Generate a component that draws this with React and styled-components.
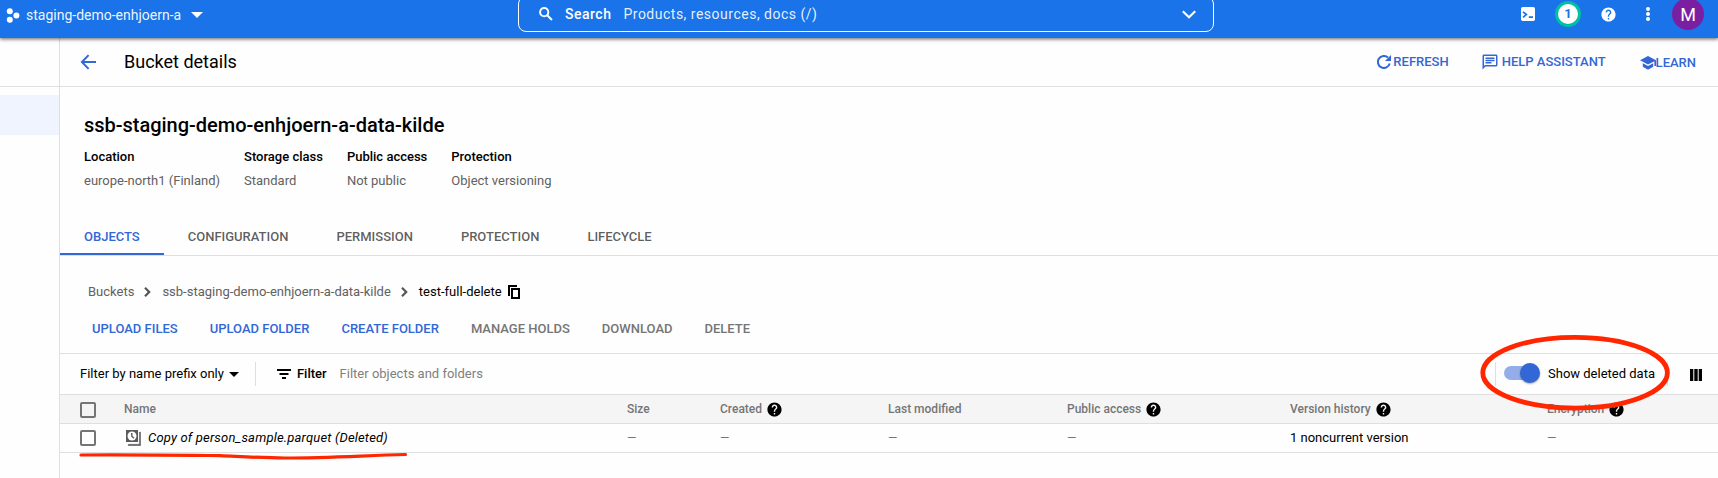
import React from 'react';
import styled, { createGlobalStyle, css } from 'styled-components';
import { MdHelp, MdOutlineChat } from 'react-icons/md';

const blue = '#3367d6';
const line = '#dfdfdf';
const grey = '#616161';

const GlobalStyle = createGlobalStyle`
  * { box-sizing: border-box; }
  html, body { margin: 0; padding: 0; overflow: hidden; }
  body {
    background: #fefefe;
    color: #000;
    font-family: Roboto, sans-serif;
    font-size: 13px;
    line-height: 18px;
  }
  svg { display: block; flex: none; }
`;

const Page = styled.div`
  position: relative;
  display: flex;
  flex-direction: column;
  height: 478px;
  overflow: hidden;
`;

/* ---- top bar ---- */
const TopBar = styled.header`
  position: relative;
  z-index: 1;
  display: grid;
  grid-template-columns: 518px 696px 1fr;
  align-items: start;
  height: 38px;
  background: #1a73e8;
  color: #fff;
  font-size: 14px;
  line-height: 20px;
  box-shadow: 0 1px 3px rgba(0, 0, 0, 0.42), 0 2px 4px rgba(0, 0, 0, 0.2);
`;
const Project = styled.div`
  display: flex;
  align-items: center;
  height: 30px;
  padding-left: 6px;
  color: #ffffffee;
`;
const ProjectName = styled.span`
  margin: 0 10px 0 6px;
`;
const SearchBox = styled.div`
  display: flex;
  align-items: center;
  height: 36px;
  margin-top: -4px;
  padding: 0 17px 0 20px;
  border: 1px solid #fff;
  border-radius: 8px;
  letter-spacing: 0.5px;
`;
const SearchLabel = styled.b`
  margin: 0 12px 0 12px;
  font-weight: 500;
`;
const SearchHint = styled.span`
  flex: 1;
  color: #ffffffe6;
`;
const TopActions = styled.div`
  display: flex;
  justify-content: flex-end;
  padding-right: 10px;
`;
const TopAction = styled.div`
  display: flex;
  align-items: center;
  justify-content: center;
  width: 40px;
  height: 28px;
`;
const Badge = styled.div`
  flex: none;
  display: flex;
  align-items: center;
  justify-content: center;
  width: 26px;
  height: 26px;
  border: 3px solid #00bfa5;
  border-radius: 50%;
  background: #fff;
  color: #1a73e8;
  font-size: 13px;
  font-weight: 700;
`;
const Avatar = styled.div`
  flex: none;
  width: 32px;
  height: 32px;
  border-radius: 50%;
  background: #7b1fa2;
  font-size: 18px;
  line-height: 33px;
  text-align: center;
`;

/* ---- body ---- */
const Body = styled.div`
  display: flex;
  flex: 1;
`;
const Nav = styled.nav`
  width: 60px;
  border-right: 1px solid ${line};
`;
const NavHead = styled.div`
  height: 49px;
  border-bottom: 1px solid ${line};
`;
const NavSelected = styled.div`
  height: 40px;
  margin-top: 8px;
  background: #f0f4ff;
`;
const Main = styled.main`
  flex: 1;
  min-width: 0;
`;
const PageHeader = styled.div`
  display: flex;
  align-items: center;
  height: 49px;
  padding: 0 22px 0 20px;
  border-bottom: 1px solid ${line};
  color: ${blue};
`;
const PageTitle = styled.h1`
  flex: 1;
  margin: 0 0 0 27px;
  color: #000;
  font-size: 18px;
  font-weight: 400;
  line-height: 24px;
`;
const HeaderAction = styled.div`
  display: flex;
  align-items: center;
  gap: ${(p) => p.$gap || 0}px;
  margin-left: ${(p) => p.$before || 0}px;
  padding-top: ${(p) => p.$drop || 0}px;
  font-weight: 500;
`;

const Summary = styled.section`
  padding: 26px 24px 0;
`;
const BucketName = styled.h2`
  margin: 0 0 11px;
  font-size: 20px;
  font-weight: 500;
  letter-spacing: -0.02px;
  line-height: 24px;
`;
const Facts = styled.dl`
  display: flex;
  gap: 24px;
  margin: 0;
`;
const FactName = styled.dt`
  margin-bottom: 6px;
  font-weight: 500;
`;
const FactValue = styled.dd`
  margin: 0;
  color: ${grey};
`;

const Tabs = styled.div`
  display: flex;
  height: 38px;
  margin-top: 28px;
  border-bottom: 1px solid ${line};
`;
const Tab = styled.div`
  padding: 10px 24px 0;
  color: #000000a6;
  font-weight: 500;
  ${(p) =>
    p.$active &&
    css`
      color: ${blue};
      border-bottom: 2px solid ${blue};
    `}
`;

const Crumbs = styled.div`
  display: flex;
  align-items: center;
  height: 18px;
  margin: 27px 0 0 28px;
  color: ${grey};
`;
const Crumb = styled.span`
  ${(p) => p.$current && 'color: #000; margin-right: 6px;'}
`;
const CrumbArrow = styled.svg`
  margin: 0 11px 0 10px;
`;

const Actions = styled.div`
  display: flex;
  gap: 32px;
  padding: 19px 0 15px 32px;
  border-bottom: 1px solid ${line};
`;
const Action = styled.span`
  color: ${(p) => (p.$disabled ? '#757575' : blue)};
  font-weight: 500;
`;

const FilterBar = styled.div`
  display: flex;
  align-items: center;
  height: 40px;
  padding: 0 16px 0 20px;
`;
const Divider = styled.i`
  width: 1px;
  height: 24px;
  margin: 0 ${(p) => p.$after}px 0 ${(p) => p.$before || 0}px;
  background: ${line};
`;
const MenuLabel = styled.span`
  margin-right: 5px;
`;
const FilterLabel = styled.b`
  margin: 0 13px 0 6px;
  font-weight: 500;
`;
const FilterHint = styled.span`
  flex: 1;
  color: #808080;
`;
const Track = styled.div`
  display: flex;
  align-items: center;
  justify-content: flex-end;
  width: 36px;
  height: 14px;
  margin: -2px 8px 0 0;
  border-radius: 7px;
  background: linear-gradient(90deg, #93ade8 0 30px, transparent 30px);
`;
const Thumb = styled.div`
  flex: none;
  width: 20px;
  height: 20px;
  border-radius: 50%;
  background: ${blue};
  box-shadow: 0 1px 2px rgba(0, 0, 0, 0.35);
`;
const ColumnsIcon = styled.svg`
  margin-top: 2px;
`;

const Row = styled.div`
  display: grid;
  grid-template-columns: 64px 503px 93px 168px 179px 223px 257px 1fr;
  align-items: center;
  height: 29px;
  padding-bottom: 1px;
  border-bottom: 1px solid ${line};
  ${(p) =>
    p.$head &&
    css`
      height: 30px;
      border-top: 1px solid ${line};
      background: #f5f5f5;
      color: #757575;
      font-size: 12px;
      font-weight: 500;
      line-height: 16px;
    `}
`;
const Cell = styled.div`
  display: flex;
  align-items: center;
  color: ${(p) => (p.$muted ? '#757575' : 'inherit')};
  font-size: ${(p) => (p.$muted ? '12px' : 'inherit')};
`;
const ObjectName = styled.i`
  margin-left: 7px;
  letter-spacing: 0.18px;
`;
const CheckBox = styled.div`
  width: 16px;
  height: 16px;
  margin: ${(p) => (p.$head ? '2px' : '1px')} 0 0 20px;
  border: 2px solid #757575;
  border-radius: 2px;
`;
const HeadHelp = styled(MdHelp)`
  margin: 2px 0 0 4px;
  color: #000;
`;

const Markup = styled.svg`
  position: absolute;
  inset: 0;
  z-index: 2;
  pointer-events: none;
`;

const ProjectIcon = () => (
  <svg width="14" height="15" viewBox="0 0 14 15" fill="#fff">
    <circle cx="3.8" cy="3.3" r="3" />
    <circle cx="3.8" cy="11.7" r="3" />
    <circle cx="10.4" cy="7.5" r="3" />
  </svg>
);
const Caret = ({ w, h, fill = '#000' }) => (
  <svg width={w} height={h} viewBox="0 0 10 5" preserveAspectRatio="none" fill={fill}>
    <path d="M0 0h10L5 5z" />
  </svg>
);
const SearchIcon = () => (
  <svg width="14" height="14" viewBox="0 0 14 14" fill="none" stroke="#fff" strokeWidth="2">
    <circle cx="5.2" cy="5.2" r="4.1" />
    <path d="M8.2 8.2l4.8 4.8" />
  </svg>
);
const DownIcon = () => (
  <svg width="14" height="9" viewBox="0 0 14 9" fill="none" stroke="#fff" strokeWidth="2.1">
    <path d="M.8 1.2L7 7.2l6.2-6" />
  </svg>
);
const ShellIcon = () => (
  <svg width="14" height="14" viewBox="0 0 14 14">
    <rect width="14" height="14" rx="1.8" fill="#fff" />
    <path d="M2 4.8l3.4 2.7L2 10.3M7.8 10.2h4.2" fill="none" stroke="#1a73e8" strokeWidth="1.7" />
  </svg>
);
const DotsIcon = () => (
  <svg width="4" height="14" viewBox="0 0 4 14" fill="#fff">
    <circle cx="2" cy="2" r="2" />
    <circle cx="2" cy="7" r="2" />
    <circle cx="2" cy="12" r="2" />
  </svg>
);
const BackIcon = () => (
  <svg width="17" height="16" viewBox="0 0 17 16" fill="none" stroke={blue} strokeWidth="2">
    <path d="M16 8H2M8.6 1.1L1.9 8l6.7 6.9" />
  </svg>
);
const RefreshIcon = () => (
  <svg width="14" height="14" viewBox="0 0 14 14">
    <path d="M12.7 8.6A6 6 0 1 1 11 2.6" fill="none" stroke={blue} strokeWidth="2" />
    <path d="M14 0v6H8z" fill={blue} />
  </svg>
);
const LearnIcon = () => (
  <svg width="16" height="14" viewBox="0 0 16 14" fill={blue}>
    <path d="M8 0l8 4.3V10h-1.6V5.2L8 8.6 0 4.3z" />
    <path d="M2.8 7.2L8 10l5.2-2.8v3.6L8 13.8l-5.2-3z" />
  </svg>
);
const Arrow = () => (
  <CrumbArrow width="7" height="10" viewBox="0 0 7 10" fill="none" stroke="#555" strokeWidth="2.2">
    <path d="M1 .8L5.2 5 1 9.2" />
  </CrumbArrow>
);
const CopyIcon = () => (
  <svg width="12" height="14" viewBox="0 0 12 14" fill="none" stroke="#000" strokeWidth="2">
    <path d="M9 1H1v10M4 4h7v9H4z" />
  </svg>
);
const FilterIcon = () => (
  <svg width="14" height="10" viewBox="0 0 14 10" fill="#000">
    <path d="M0 0h14v2H0zM2.5 4h9v2h-9zM5 8h4v2H5z" />
  </svg>
);
const VersionIcon = () => (
  <svg width="17" height="16" viewBox="-1 0 17 16">
    <path d="M1 0h12v12H1z" fill="#5a5a5a" />
    <path d="M14.3 2v12.3H3.2v1.4h12.5V2z" fill="#5a5a5a" stroke="#5a5a5a" strokeWidth=".3" />
    <circle cx="7" cy="6" r="4.5" fill="#fff" />
    <path d="M6.8 3v3.3L9 8.2" fill="none" stroke="#5a5a5a" strokeWidth="1.4" />
  </svg>
);

const facts = [
  ['Location', 'europe-north1 (Finland)'],
  ['Storage class', 'Standard'],
  ['Public access', 'Not public'],
  ['Protection', 'Object versioning'],
];
const tabs = ['OBJECTS', 'CONFIGURATION', 'PERMISSION', 'PROTECTION', 'LIFECYCLE'];
const columns = [
  ['Name'],
  ['Size'],
  ['Created', true],
  ['Last modified'],
  ['Public access', true],
  ['Version history', true],
  ['Encryption', true],
];

export default function App() {
  return (
    <Page>
      <GlobalStyle />
      <TopBar>
        <Project>
          <ProjectIcon />
          <ProjectName>staging-demo-enhjoern-a</ProjectName>
          <Caret w={12} h={6} fill="#fff" />
        </Project>
        <SearchBox>
          <SearchIcon />
          <SearchLabel>Search</SearchLabel>
          <SearchHint>Products, resources, docs (/)</SearchHint>
          <DownIcon />
        </SearchBox>
        <TopActions>
          <TopAction><ShellIcon /></TopAction>
          <TopAction><Badge>1</Badge></TopAction>
          <TopAction><MdHelp size={17} /></TopAction>
          <TopAction><DotsIcon /></TopAction>
          <TopAction><Avatar>M</Avatar></TopAction>
        </TopActions>
      </TopBar>
      <Body>
        <Nav>
          <NavHead />
          <NavSelected />
        </Nav>
        <Main>
          <PageHeader>
            <BackIcon />
            <PageTitle>Bucket details</PageTitle>
            <HeaderAction $gap={2}>
              <RefreshIcon />
              REFRESH
            </HeaderAction>
            <HeaderAction $before={32} $gap={3}>
              <MdOutlineChat size={18} />
              HELP ASSISTANT
            </HeaderAction>
            <HeaderAction $before={34} $drop={1}>
              <LearnIcon />
              LEARN
            </HeaderAction>
          </PageHeader>
          <Summary>
            <BucketName>ssb-staging-demo-enhjoern-a-data-kilde</BucketName>
            <Facts>
              {facts.map(([name, value]) => (
                <div key={name}>
                  <FactName>{name}</FactName>
                  <FactValue>{value}</FactValue>
                </div>
              ))}
            </Facts>
          </Summary>
          <Tabs>
            {tabs.map((t, i) => (
              <Tab key={t} $active={i === 0}>{t}</Tab>
            ))}
          </Tabs>
          <Crumbs>
            <Crumb>Buckets</Crumb>
            <Arrow />
            <Crumb>ssb-staging-demo-enhjoern-a-data-kilde</Crumb>
            <Arrow />
            <Crumb $current>test-full-delete</Crumb>
            <CopyIcon />
          </Crumbs>
          <Actions>
            <Action>UPLOAD FILES</Action>
            <Action>UPLOAD FOLDER</Action>
            <Action>CREATE FOLDER</Action>
            <Action $disabled>MANAGE HOLDS</Action>
            <Action $disabled>DOWNLOAD</Action>
            <Action $disabled>DELETE</Action>
          </Actions>
          <FilterBar>
            <MenuLabel>Filter by name prefix only</MenuLabel>
            <Caret w={10} h={5} />
            <Divider $before={16} $after={21} />
            <FilterIcon />
            <FilterLabel>Filter</FilterLabel>
            <FilterHint>Filter objects and folders</FilterHint>
            <Divider $after={8} />
            <Track><Thumb /></Track>
            Show deleted data
            <Divider $before={12} $after={22} />
            <ColumnsIcon width="12" height="12" viewBox="0 0 12 12">
              <path d="M0 0h3.3v12H0zM4.3 0h3.4v12H4.3zM8.7 0H12v12H8.7z" />
            </ColumnsIcon>
          </FilterBar>
          <Row $head>
            <CheckBox $head />
            {columns.map(([label, help]) => (
              <Cell key={label}>
                {label}
                {help && <HeadHelp size={17} />}
              </Cell>
            ))}
          </Row>
          <Row>
            <CheckBox />
            <Cell>
              <VersionIcon />
              <ObjectName>Copy of person_sample.parquet (Deleted)</ObjectName>
            </Cell>
            <Cell $muted>—</Cell>
            <Cell $muted>—</Cell>
            <Cell $muted>—</Cell>
            <Cell $muted>—</Cell>
            <Cell>1 noncurrent version</Cell>
            <Cell $muted>—</Cell>
          </Row>
        </Main>
      </Body>
      <Markup width="1718" height="478" fill="none" stroke="#ff2600" strokeLinecap="round">
        <ellipse cx="1575.1" cy="372.7" rx="92.3" ry="35.4" strokeWidth="4.8" />
        <path d="M81 455C130 454.6 180 455.2 220 455.6C242 456.6 262 458 285 458C330 458 366 455.4 405.5 454.5" strokeWidth="3.2" />
      </Markup>
    </Page>
  );
}
